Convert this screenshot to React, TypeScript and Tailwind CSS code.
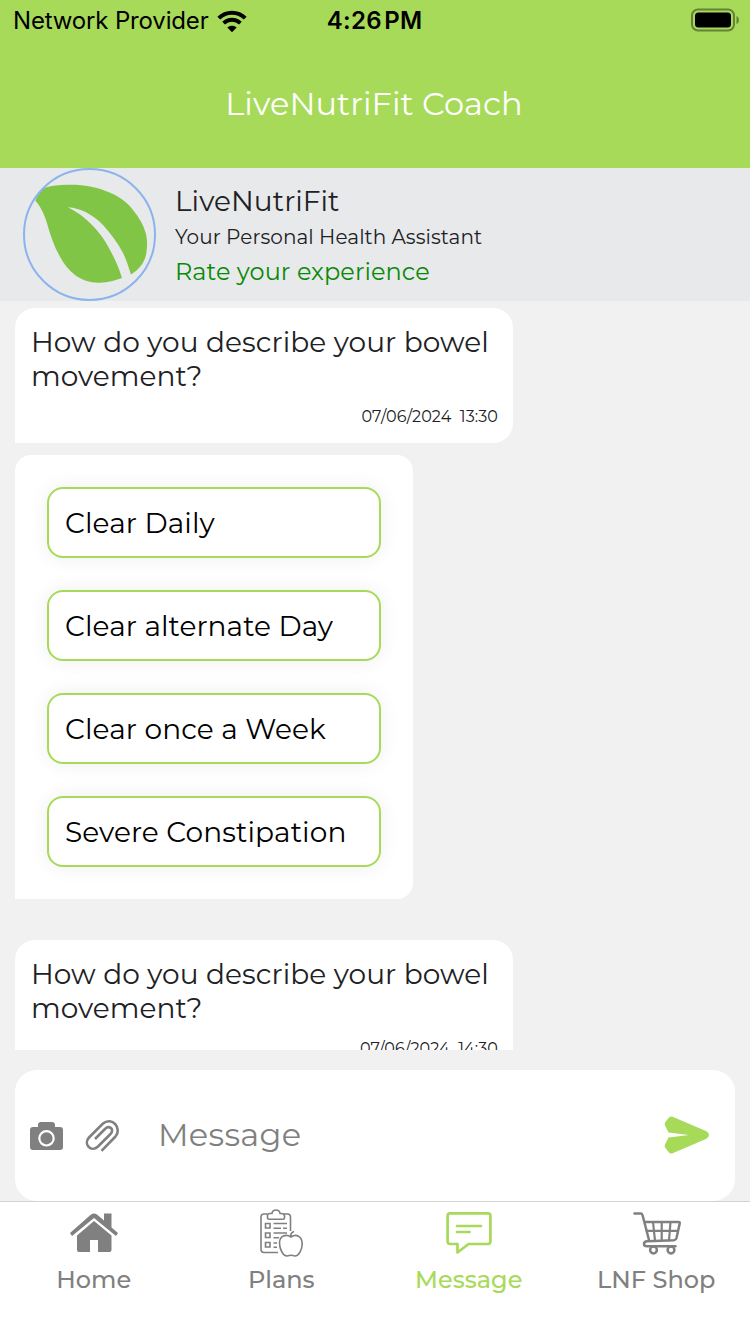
import React from "react";

const options = ["Clear Daily", "Clear alternate Day", "Clear once a Week", "Severe Constipation"];

function WifiIcon() {
  return (
    <svg className="ml-[8px] h-[23px] w-[30px] shrink-0" viewBox="0 0 30 23" fill="none">
      <path d="M1.8 8.2C9 0.8 21 0.8 28.2 8.2" stroke="#000" strokeWidth="4" />
      <path d="M6.6 13.2C11.4 8.6 18.6 8.6 23.4 13.2" stroke="#000" strokeWidth="3.8" />
      <path d="M10.3 17.6C13 15.1 17 15.1 19.7 17.6L15 22.2Z" fill="#000" />
    </svg>
  );
}

function Leaf() {
  return (
    <svg className="h-[133px] w-[133px] shrink-0" viewBox="0 0 133 133">
      <path
        d="M12.3 32.5C14 27 18 22 22 19.7C29 17.5 36 17.3 44 16.8C52 16.5 60 17 67 18.4C75 20 83 22.5 90 26C98 30 105 35 110 42C116 49 120.5 57 122.7 65C124.3 71 124.3 77 123.7 82C123 93 117 101 108 106.5C105.5 99 103.5 92 100 85C95 75 88 66 80 57C70 47 58 40 44.7 39.3C53 43.5 60 48 67 55C75 62.5 82 72 87 82C92 91 96 100 99 110C92 112.5 85 114.7 77 114.7C67 115 59 112 52 107C45.5 102 41 96 37 88.7C31.5 79 28 69 25 58.7C22 47.5 18 39 12.3 32.5Z"
        fill="#81c547"
      />
      <circle cx="66.5" cy="66.5" r="65.5" fill="none" stroke="#8bb3ee" strokeWidth="2" />
    </svg>
  );
}

function Question({ time }: { time: string }) {
  return (
    <div className="h-[135px] w-[498px] shrink-0 rounded-[20px] rounded-bl-none bg-white pt-[17px] pr-[15px] pl-[16px]">
      <p className="text-[28px] leading-[34px] tracking-[0.07px] whitespace-nowrap text-[#202124]">
        How do you describe your bowel
        <br />
        movement?
      </p>
      <p className="mt-[14px] text-right text-[16px] leading-[20px] tracking-[0.07px] whitespace-pre text-[#202124]">{time}</p>
    </div>
  );
}

function HomeIcon() {
  return (
    <svg className="h-[48px] w-[48px]" viewBox="0 0 48 48" fill="#808080">
      <path d="M34 4.5H41.5V18.5L48 24L46 27L24 9L2 27L0 24L21 5.5Q24 3.3 27 5.5L34 11.5Z" />
      <path d="M24 12L41.5 26.5V41Q41.5 43 39.5 43H28V31H20V43H9Q7 43 7 41V26.5Z" />
    </svg>
  );
}

function PlansIcon() {
  return (
    <svg className="h-[48px] w-[44px]" viewBox="0 0 44 48" fill="none" stroke="#808080" strokeWidth="1.6">
      <path d="M8.5 5H5Q2 5 2 8V40Q2 43.5 5 43.5H19M25 5H28.5Q31.5 5 31.5 8V22" />
      <path d="M8.5 9V6.5Q8.5 4.5 11 4.5H13Q13.5 1 17 1Q20.5 1 21 4.5H22.5Q25.5 4.5 25.5 7V9Q25.5 10.2 24 10.2H10Q8.5 10.2 8.5 9Z" />
      <path d="M6.5 14.5H11V19H6.5ZM6.5 24H11V28.5H6.5ZM6.5 33.5H11V38H6.5Z" />
      <path d="M14.5 14.5H28M14.5 19.2H22M24 19.2H28M14.5 24H28M14.5 28.7H20M14.5 34H18M14.5 38.2H18" />
      <path d="M32 28C27 24.5 20.5 27 20.5 34C20.5 40 24 47 28 47C30 47 30.5 46.2 32 46.2C33.5 46.2 34 47 36 47C40 47 43.2 40 43.2 35C43.2 27 37 24.5 32 28ZM32 28Q31 24 35 22.5" />
    </svg>
  );
}

function MessageIcon() {
  return (
    <svg className="h-[48px] w-[46px]" viewBox="0 0 46 48" fill="none" stroke="#a7da59" strokeWidth="2.7" strokeLinecap="round" strokeLinejoin="round">
      <path d="M4 4.3H42Q44.4 4.3 44.4 7V32Q44.4 35 42 35H22.5L11.5 43.5V35H4Q1.6 35 1.6 32V7Q1.6 4.3 4 4.3Z" />
      <path d="M11 17H35M11 23H23.5" />
    </svg>
  );
}

function CartIcon() {
  return (
    <svg className="ml-[1px] h-[48px] w-[48px]" viewBox="0 0 48 48" fill="none" stroke="#808080" strokeWidth="2.5" strokeLinecap="round" strokeLinejoin="round">
      <path d="M1.5 4.5H8Q9.2 4.5 9.5 6L16 31M11.5 13H45.5Q47 13 46.7 14.5L43.5 29Q43 31 41 31.3L14 32.3Q11 32.5 11 35Q11 37.3 14 37.3H42.5" />
      <path d="M13.5 21.8H45M20 13L22 31.5M28.7 13V31.5M37.5 13L36 31.5" strokeWidth="2.2" />
      <circle cx="20.5" cy="41" r="3.4" />
      <circle cx="38" cy="41" r="3.4" />
    </svg>
  );
}

const tabs = [
  { label: "Home", icon: <HomeIcon />, text: "text-[#808080]" },
  { label: "Plans", icon: <PlansIcon />, text: "text-[#808080]" },
  { label: "Message", icon: <MessageIcon />, text: "text-[#a7da59]" },
  { label: "LNF Shop", icon: <CartIcon />, text: "text-[#808080]" },
];

export default function App() {
  return (
    <div className="flex h-[1334px] w-[750px] flex-col overflow-hidden bg-[#f1f1f1] font-['Montserrat','Inter',sans-serif] font-normal">
      <header className="h-[168px] shrink-0 bg-[#a7da59]">
        <div className="grid h-10 grid-cols-3 items-center pr-[11px] pl-[13px] font-['Inter',sans-serif] text-black">
          <div className="flex items-center">
            <span className="text-[24px] leading-[42px] font-normal tracking-[-0.16px] whitespace-nowrap">Network Provider</span>
            <WifiIcon />
          </div>
          <span className="mr-[3px] text-center text-[24px] leading-[42px] font-semibold tracking-[0.3px] [word-spacing:-4px]">4:26 PM</span>
          <svg className="mt-[-2px] h-[24px] w-[49px] justify-self-end" viewBox="0 0 49 24">
            <rect x="2" y="1.5" width="42" height="21" rx="6" fill="none" stroke="#64823a" strokeWidth="2" />
            <rect x="5" y="4.5" width="36" height="15" rx="3.5" />
            <path d="M46.5 8Q49 9 49 12T46.5 16Z" fill="#64823a" />
          </svg>
        </div>
        <h1 className="mr-[2px] pt-[43px] text-center text-[32px] leading-[42px] font-normal tracking-[0.1px] text-white">LiveNutriFit Coach</h1>
      </header>

      <section className="flex h-[133px] shrink-0 bg-[#e8e9eb] pl-[23px]">
        <Leaf />
        <div className="pt-[16px] pl-[19px] tracking-[0.07px] whitespace-nowrap text-[#202124]">
          <p className="text-[28px] leading-[35px]">LiveNutriFit</p>
          <p className="pt-[1px] text-[20px] leading-[34px]">Your Personal Health Assistant</p>
          <p className="text-[24px] leading-[35px] text-[#088a08]">Rate your experience</p>
        </div>
      </section>

      <main className="flex h-[749px] shrink-0 flex-col overflow-hidden pt-[7px] pl-[15px]">
        <Question time="07/06/2024  13:30" />
        <div className="mt-[12px] flex w-[398px] shrink-0 flex-col gap-[32px] rounded-[16px] rounded-bl-none bg-white p-[32px]">
          {options.map((label) => (
            <button
              key={label}
              className="h-[71px] rounded-[16px] border-2 border-[#a7da59] bg-white pl-[16px] text-left text-[28px] tracking-[0.09px] whitespace-nowrap text-black shadow-[0_0_20px_rgba(0,0,0,0.07)]"
            >
              {label}
            </button>
          ))}
        </div>
        <div className="mt-[41px]">
          <Question time="07/06/2024  14:30" />
        </div>
      </main>

      <div className="mx-[15px] mt-[20px] flex h-[131px] shrink-0 items-center rounded-[22px] bg-white pr-[25px] pl-[15px]">
        <svg className="h-[28px] w-[33px]" viewBox="0 0 33 28">
          <path d="M3 5H8V3Q8 0 11 0H22Q25 0 25 3V5H30Q33 5 33 8V25Q33 28 30 28H3Q0 28 0 25V8Q0 5 3 5Z" fill="#808080" />
          <circle cx="16.5" cy="16.3" r="7.2" fill="#808080" stroke="#fff" strokeWidth="2.2" />
        </svg>
        <svg className="ml-[22px] h-[34px] w-[35px]" viewBox="0 0 35 34" fill="none" stroke="#808080" strokeWidth="2.6">
          <path d="M16.5 31.8L30.5 17.5C37.5 9.5 27 -3 18 4.5L4 18.5C-2 25 6 34 13 27.5L25.5 15C30 10 24 6 20 10L10 20" />
        </svg>
        <span className="mb-[2px] ml-[38px] flex-1 text-[32px] font-[380] tracking-[0.3px] text-[#808080]">Message</span>
        <svg className="mb-[1px] h-[38px] w-[46px]" viewBox="0 0 46 38" fill="#a7da59">
          <path d="M8 0.5L42 15Q45 16.5 45 19T42 23L8 37.5Q6 38 4.5 36L1.5 32Q0 30.5 1 28.5L4.5 21.5L25 19L4.5 16.5L1 9.5Q0 7.5 1.5 6L4.5 2Q6 0 8 0.5Z" />
        </svg>
      </div>

      <nav className="grid h-[133px] shrink-0 grid-cols-4 border-t border-[#d4d4d4] bg-white pt-[7px]">
        {tabs.map((tab) => (
          <div key={tab.label} className="flex flex-col items-center">
            {tab.icon}
            <span className={"mt-[8px] text-[24px] leading-[30px] font-medium " + tab.text}>{tab.label}</span>
          </div>
        ))}
      </nav>
    </div>
  );
}
